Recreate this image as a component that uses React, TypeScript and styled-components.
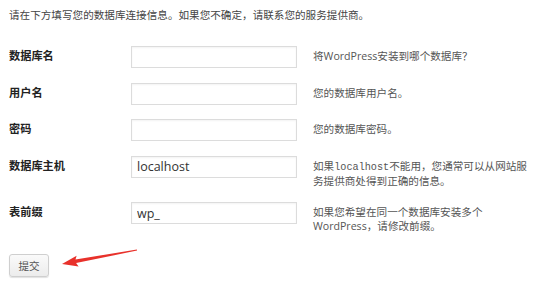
import React from "react";
import styled, { createGlobalStyle } from "styled-components";

const Global = createGlobalStyle`
  html, body { margin: 0; padding: 0; background: #fff; }
  body { font-family: "Open Sans", "Noto Sans CJK SC", sans-serif; }
`;

const Page = styled.div`
  width: 554px;
  height: 288px;
  box-sizing: border-box;
  padding: 8px 0 0 9px;
  overflow: hidden;
`;

const Intro = styled.p`
  margin: 0 0 25px 0;
  font-family: "Noto Sans CJK SC", sans-serif;
  font-size: 10.6px;
  line-height: 13px;
  color: #444;
`;

const Form = styled.div`
  display: flex;
  flex-direction: column;
  gap: 14.5px;
`;

const Row = styled.div`
  display: grid;
  grid-template-columns: 122px 166px 240px;
  align-items: start;
`;

const Label = styled.div`
  font-family: "Noto Sans CJK SC", sans-serif;
  font-weight: 700;
  font-size: 11.2px;
  line-height: 19px;
  color: #222;
`;

const Input = styled.input`
  box-sizing: border-box;
  width: 166px;
  height: 22px;
  margin: 0;
  padding: 0 5px;
  border: 1px solid #dcdcdc;
  background: #fff;
  box-shadow: inset 0 1px 2px rgba(0, 0, 0, 0.05);
  font-family: "Open Sans", sans-serif;
  font-size: 12.5px;
  color: #333;
  outline: none;
`;

const Desc = styled.div`
  margin-left: 16px;
  padding-top: 3px;
  font-family: "Noto Sans CJK SC", sans-serif;
  font-size: 10.6px;
  line-height: 13.5px;
  color: #555;
`;

const Latin = styled.span`
  font-family: "Open Sans", sans-serif;
  font-size: 10.6px;
`;

const Mono = styled.span`
  font-family: "Liberation Mono", "DejaVu Sans Mono", monospace;
  font-size: 10.2px;
`;

const Actions = styled.div`
  display: flex;
  align-items: flex-start;
  margin-top: 21px;
`;

const Button = styled.button`
  box-sizing: border-box;
  width: 40px;
  height: 23px;
  margin: 0;
  padding: 0;
  border: 1px solid #cfcfcf;
  border-radius: 3px;
  background: linear-gradient(#fafafa, #ececec);
  box-shadow: 0 1px 1px rgba(0, 0, 0, 0.12);
  font-family: "Noto Sans CJK SC", sans-serif;
  font-size: 10.6px;
  color: #555;
`;

const ArrowSvg = styled.svg`
  display: block;
  margin-left: 10px;
  margin-top: -8px;
  flex: none;
`;

const Arrow = () => (
  <ArrowSvg width="80" height="26" viewBox="0 0 80 26">
    <polygon
      points="3,18 19.6,20.5 17.1,17 78.1,4.6 77.9,3.4 16.5,13.6 17.6,9.8"
      fill="#e8312b"
    />
  </ArrowSvg>
);

type Field = {
  label: string;
  value?: string;
  desc: React.ReactNode;
};

const fields: Field[] = [
  {
    label: "数据库名",
    desc: (
      <>
        将<Latin>WordPress</Latin>安装到哪个数据库？
      </>
    ),
  },
  { label: "用户名", desc: "您的数据库用户名。" },
  { label: "密码", desc: "您的数据库密码。" },
  {
    label: "数据库主机",
    value: "localhost",
    desc: (
      <>
        如果<Mono>localhost</Mono>不能用，您通常可以从网站服
        <br />
        务提供商处得到正确的信息。
      </>
    ),
  },
  {
    label: "表前缀",
    value: "wp_",
    desc: (
      <>
        如果您希望在同一个数据库安装多个
        <br />
        <Latin>WordPress</Latin>，请修改前缀。
      </>
    ),
  },
];

export default function App() {
  return (
    <>
      <Global />
      <Page>
        <Intro>请在下方填写您的数据库连接信息。如果您不确定，请联系您的服务提供商。</Intro>
        <Form>
          {fields.map((f) => (
            <Row key={f.label}>
              <Label>{f.label}</Label>
              <Input defaultValue={f.value ?? ""} />
              <Desc>{f.desc}</Desc>
            </Row>
          ))}
        </Form>
        <Actions>
          <Button>提交</Button>
          <Arrow />
        </Actions>
      </Page>
    </>
  );
}
